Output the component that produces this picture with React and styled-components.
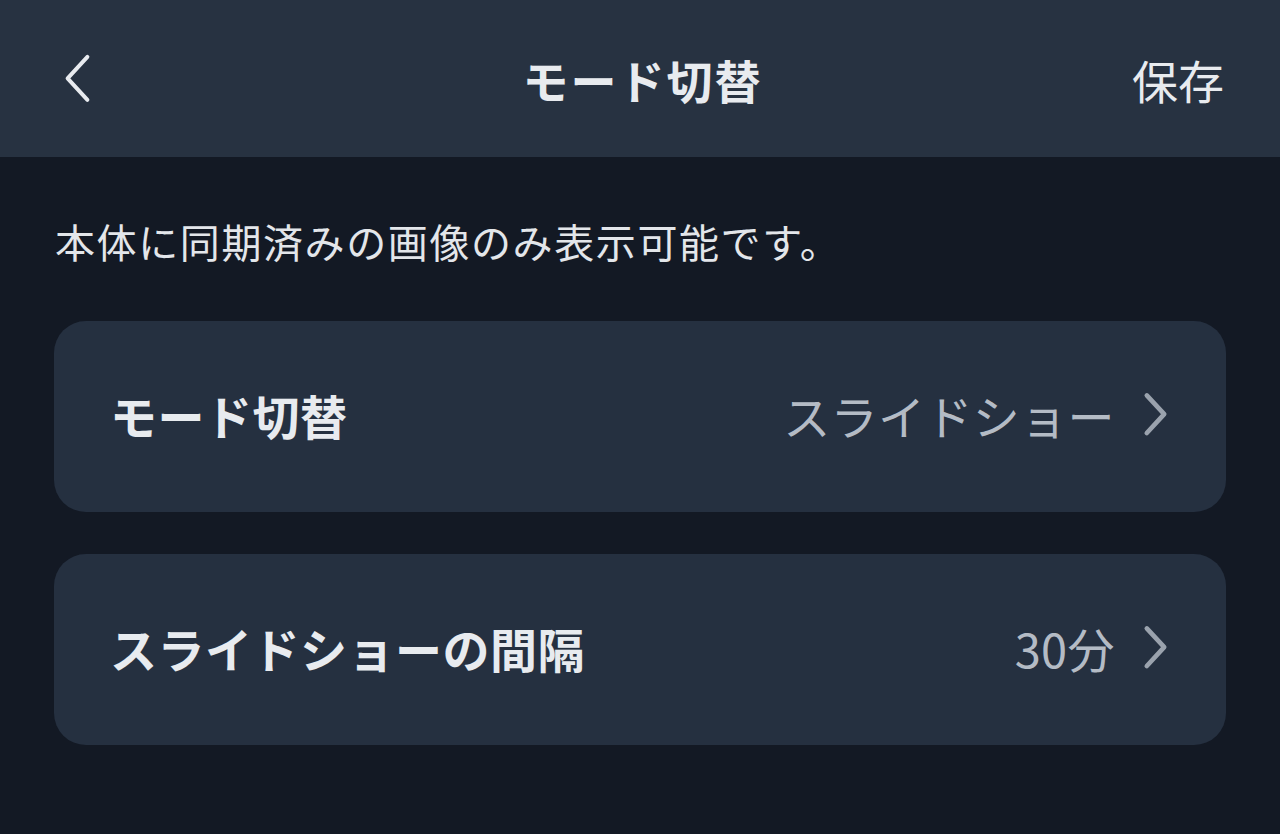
import React from 'react'
import styled, { createGlobalStyle } from 'styled-components'

const GlobalStyle = createGlobalStyle`
  html, body {
    margin: 0;
    padding: 0;
    background: #131924;
  }
  body {
    font-family: "Noto Sans CJK JP", "Noto Sans", sans-serif;
    color: #e8ebef;
  }
`

const rows = [
  { id: 'mode', label: 'モード切替', value: 'スライドショー' },
  { id: 'interval', label: 'スライドショーの間隔', value: '30分' },
]

const Chevron = ({ dir = 'right', size = 28, color = '#9aa2ad', stroke = 3.2 }) => (
  <svg width={size} height={size * 1.6} viewBox="0 0 20 32" fill="none">
    <path
      d={dir === 'right' ? 'M4 3 L16 16 L4 29' : 'M16 3 L4 16 L16 29'}
      stroke={color}
      strokeWidth={stroke}
      strokeLinecap="round"
      strokeLinejoin="round"
    />
  </svg>
)

const App = () => {
  return (
    <Page>
      <GlobalStyle />
      <Header>
        <BackButton>
          <Chevron dir="left" size={33} color="#e8ebef" stroke={2.4} />
        </BackButton>
        <Title>モード切替</Title>
        <SaveButton>保存</SaveButton>
      </Header>
      <Content>
        <Notice>本体に同期済みの画像のみ表示可能です。</Notice>
        <List>
          {rows.map((row) => (
            <Row key={row.id}>
              <Label>{row.label}</Label>
              <ValueGroup>
                <Value>{row.value}</Value>
                <Chevron size={29} />
              </ValueGroup>
            </Row>
          ))}
        </List>
      </Content>
    </Page>
  )
}

export default App

const Page = styled.div`
  min-height: 834px;
  background: #131924;
`

const Header = styled.header`
  height: 157px;
  background: #273241;
  display: grid;
  grid-template-columns: 1fr auto 1fr;
  align-items: center;
  padding: 0 56px 0 61px;
  box-sizing: border-box;
`

const BackButton = styled.div`
  display: flex;
  align-items: center;
  justify-self: start;
`

const Title = styled.h1`
  margin: 0;
  font-size: 46px;
  font-weight: 700;
  color: #e8ebef;
  letter-spacing: 2px;
`

const SaveButton = styled.div`
  justify-self: end;
  font-size: 46px;
  font-weight: 400;
  color: #e8ebef;
`

const Content = styled.main`
  padding: 58px 54px 0 54px;
`

const Notice = styled.p`
  margin: 0 0 0 1px;
  font-size: 40px;
  line-height: 52px;
  letter-spacing: 1.6px;
  color: #e3e6ea;
`

const List = styled.div`
  margin-top: 54px;
  display: flex;
  flex-direction: column;
  gap: 42px;
`

const Row = styled.div`
  height: 191px;
  background: #253040;
  border-radius: 32px;
  display: flex;
  align-items: center;
  justify-content: space-between;
  padding: 0 56px 4px;
  box-sizing: border-box;
`

const Label = styled.span`
  font-size: 47px;
  font-weight: 700;
  color: #e8ebef;
  letter-spacing: 0.5px;
`

const ValueGroup = styled.div`
  display: flex;
  align-items: center;
  gap: 26px;
`

const Value = styled.span`
  font-size: 47px;
  font-weight: 400;
  color: #b4bbc5;
  letter-spacing: 0.4px;
`
